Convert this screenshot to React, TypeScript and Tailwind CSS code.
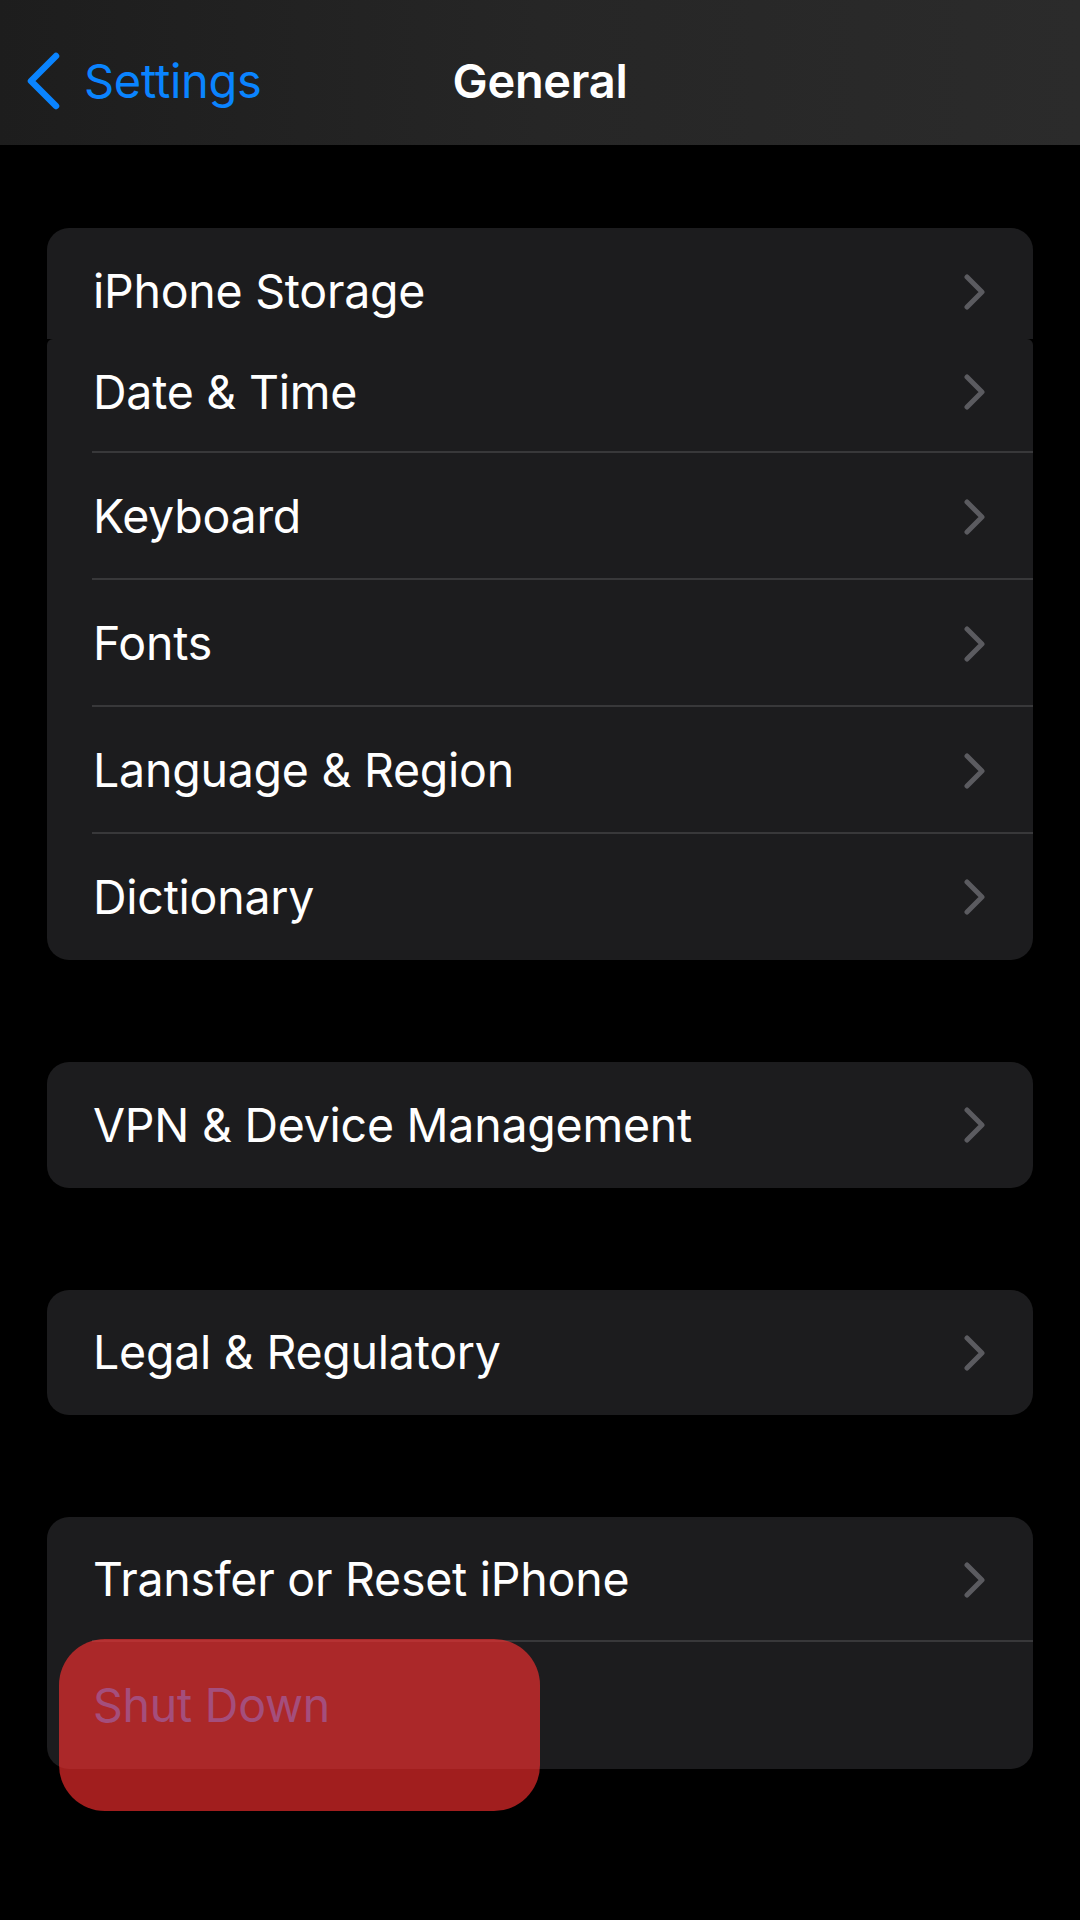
import { ReactNode } from 'react';

const font = { fontFamily: 'Inter, "Noto Sans", sans-serif' };

const Chevron = () => (
  <svg width="22" height="36" viewBox="0 0 22 36" fill="none" className="shrink-0">
    <path d="M3 3 L18 18 L3 33" stroke="#5b5b60" strokeWidth="5" strokeLinecap="round" strokeLinejoin="round" />
  </svg>
);

const Row = ({
  label,
  className = '',
  divider = false,
  blue = false,
  chevron = true,
}: {
  label: string;
  className?: string;
  divider?: boolean;
  blue?: boolean;
  chevron?: boolean;
}) => (
  <div className={`relative flex items-center pl-[46px] pr-[47px] ${className}`}>
    <span className={`flex-1 text-[46.5px] leading-none tracking-[-0.25px] ${blue ? 'text-[#0a84ff]' : 'text-white'}`}>
      {label}
    </span>
    {chevron && <Chevron />}
    {divider && <div className="absolute bottom-0 left-[45px] right-0 h-[2px] bg-[#38383a]" />}
  </div>
);

const Card = ({ children, className = '' }: { children: ReactNode; className?: string }) => (
  <div className={`bg-[#1c1c1e] overflow-hidden ${className}`}>{children}</div>
);

export default function App() {
  return (
    <div className="w-[1080px] min-h-[1920px] bg-black" style={font}>
      {/* Nav bar */}
      <header className="relative h-[145px] flex items-center pt-[16px] bg-gradient-to-r from-[#1d1d1d] via-[#262626] to-[#2b2b2b]">
        <div className="flex items-center pl-[26px]">
          <svg width="36" height="58" viewBox="0 0 36 58" fill="none">
            <path d="M30 4 L5 29 L30 54" stroke="#0a84ff" strokeWidth="6.5" strokeLinecap="round" strokeLinejoin="round" />
          </svg>
          <span className="ml-[22px] text-[47px] leading-none text-[#0a84ff] tracking-[-0.3px]">Settings</span>
        </div>
        <span className="absolute left-1/2 -translate-x-1/2 text-[47px] leading-none font-semibold text-white tracking-[-0.3px]">
          General
        </span>
      </header>

      <main className="px-[47px] pt-[83px] flex flex-col">
        <Card className="rounded-t-[22px]">
          <Row label="iPhone Storage" className="h-[111px] pt-[16px]" />
        </Card>

        <Card className="rounded-t-[6px] rounded-b-[22px]">
          <Row label="Date & Time" className="h-[114px] pb-[8px]" divider />
          <Row label="Keyboard" className="h-[127px]" divider />
          <Row label="Fonts" className="h-[127px]" divider />
          <Row label="Language & Region" className="h-[127px]" divider />
          <Row label="Dictionary" className="h-[126px]" />
        </Card>

        <Card className="mt-[102px] rounded-[22px]">
          <Row label="VPN & Device Management" className="h-[126px]" />
        </Card>

        <Card className="mt-[102px] rounded-[22px]">
          <Row label="Legal & Regulatory" className="h-[125px]" />
        </Card>

        <div className="relative mt-[102px]">
          <Card className="rounded-[22px]">
            <Row label="Transfer or Reset iPhone" className="h-[125px]" divider />
            <Row label="Shut Down" className="h-[127px]" blue chevron={false} />
          </Card>
          {/* red highlight over Shut Down */}
          <div className="absolute left-[12px] top-[122px] w-[481px] h-[172px] rounded-[46px] bg-[rgba(255,47,48,0.63)]" />
        </div>
      </main>
    </div>
  );
}
